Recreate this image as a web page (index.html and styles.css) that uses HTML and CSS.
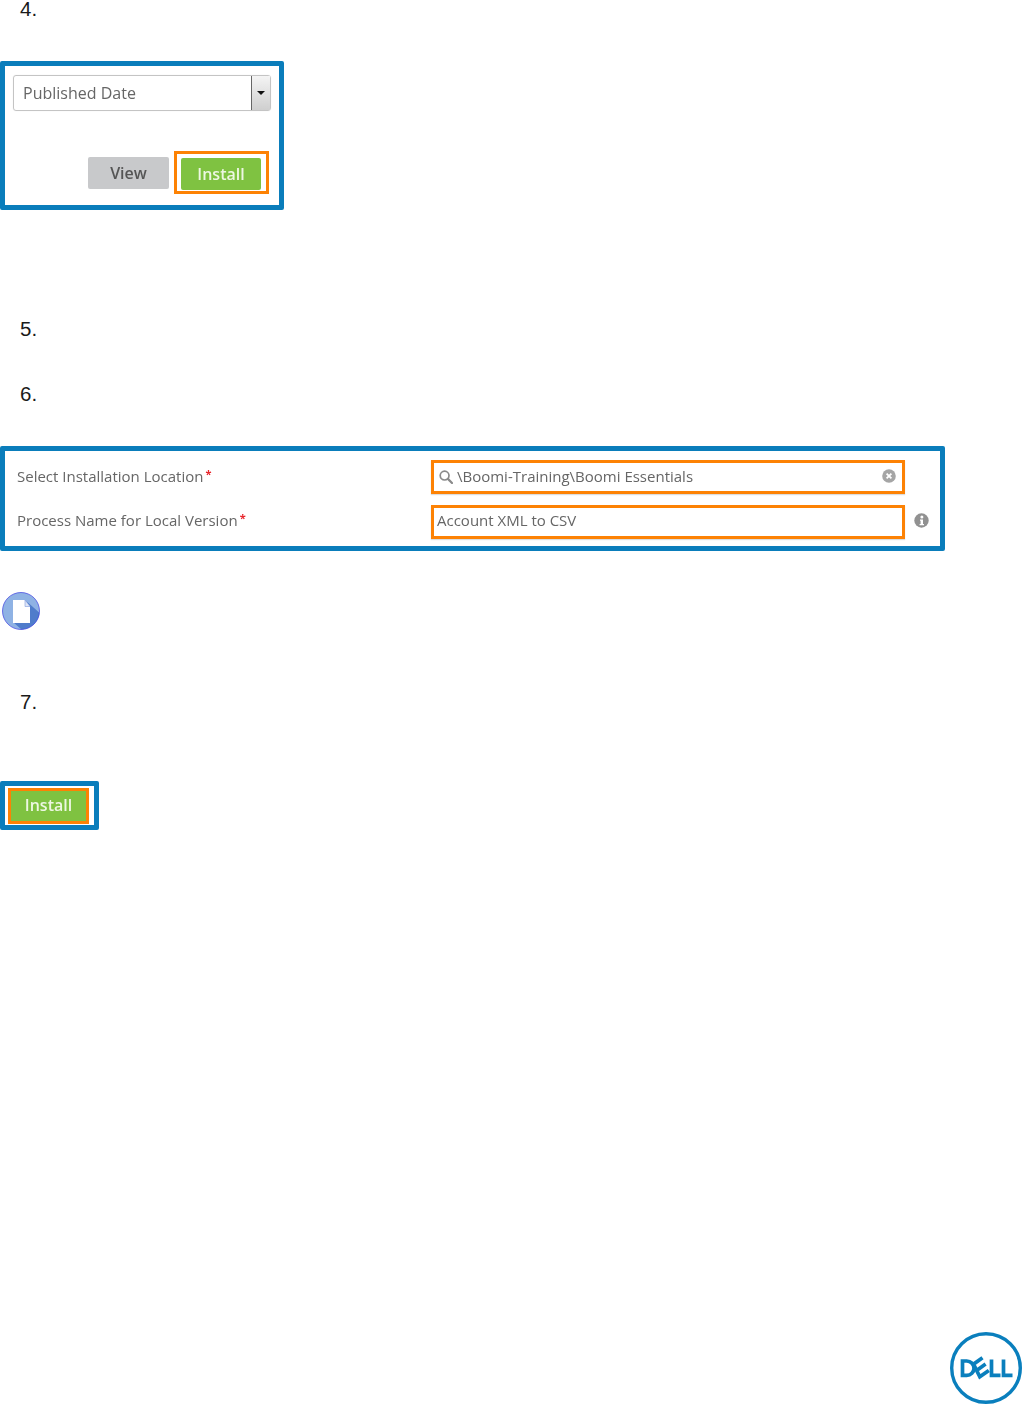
FILE: index.html
```html
<!DOCTYPE html>
<html lang="en">
<head>
<meta charset="utf-8">
<title>Install process</title>
<link rel="stylesheet" href="styles.css">
</head>
<body>
<main class="page">
  <p class="step">4.</p>
  <section class="shot shot-install">
    <div class="select">
      <span class="select-value">Published Date</span>
      <span class="select-btn"><i class="caret"></i></span>
    </div>
    <div class="actions">
      <span class="btn btn-view">View</span>
      <span class="hl hl-install"><span class="btn btn-go">Install</span></span>
    </div>
  </section>
  <p class="step step-5">5.</p>
  <p class="step step-6">6.</p>
  <section class="shot shot-form">
    <label class="lbl lbl-first">Select Installation Location<b class="req">*</b></label>
    <div class="field field-first">
      <svg class="ico-search" viewBox="0 0 14 14" width="14" height="14"><circle cx="5.6" cy="5.6" r="4.4" fill="none" stroke="#8a8a8a" stroke-width="1.7"/><path d="M8.900 8.900 13 13" stroke="#8a8a8a" stroke-width="2.200" stroke-linecap="round"/></svg>
      <span class="val">\Boomi-Training\Boomi Essentials</span>
      <svg class="ico-clear" viewBox="0 0 14 14" width="14" height="14"><circle cx="7" cy="7" r="6.800" fill="#a5a5a5"/><path d="M4.600 4.600 9.400 9.400M9.400 4.600 4.600 9.400" stroke="#fff" stroke-width="1.800"/></svg>
    </div>
    <span></span>
    <label class="lbl lbl-second">Process Name for Local Version<b class="req">*</b></label>
    <div class="field field-plain"><span class="val">Account XML to CSV</span></div>
    <svg class="ico-info" viewBox="0 0 15 15" width="15" height="15"><circle cx="7.500" cy="7.500" r="7.200" fill="#919191"/><circle cx="7.900" cy="3.900" r="1.500" fill="#fff"/><path d="M6 6.500h3v4.400h1v1.300H5.600v-1.300h1V7.800H6z" fill="#fff"/></svg>
  </section>
  <svg class="note" viewBox="0 0 38 38" width="38" height="38">
    <defs><clipPath id="disc"><circle cx="19" cy="19" r="18.500"/></clipPath></defs>
    <circle cx="19" cy="19" r="18.500" fill="#8fb2e4"/>
    <path d="M23 8 39 22V38H20L11 30Z" fill="#4f7ccb" clip-path="url(#disc)"/>
    <path d="M11 8h12l5 6.500V31H11z" fill="#fff"/>
    <path d="M23 8v6.500h5z" fill="#dfe6f6" stroke="#7f9bdc" stroke-width=".6"/>
    <circle cx="19" cy="19" r="18.500" fill="none" stroke="#3a3ee0" stroke-width=".7"/>
  </svg>
  <p class="step step-7">7.</p>
  <section class="shot shot-final">
    <span class="hl hl-final">Install</span>
  </section>
  <svg class="dell" viewBox="0 0 72 72" width="72" height="72" role="img" aria-label="Dell">
    <circle cx="36" cy="36" r="34.300" fill="none" stroke="#0a7fbd" stroke-width="3.400"/>
    <g fill="none" stroke="#0a7fbd" stroke-width="3.700">
      <path d="M12.500 29h4.300a7.200 7.200 0 0 1 0 14.400h-4.300z"/>
      <path d="M32.500 25.800 23.500 32.200 29.800 44.800 38.800 38.400M26.600 38.400 35.600 32.100"/>
      <path d="M41.500 27.500v15.900h9M53.500 27.500v15.900h9"/>
    </g>
  </svg>
</main>
</body>
</html>
```
FILE: styles.css
```css
* { box-sizing: border-box; }
html, body { margin: 0; padding: 0; background: #fff; overflow: hidden; }
.page { width: 1023px; height: 1405px; display: flex; flex-direction: column; align-items: flex-start; }
.step { margin: 0 0 0 20px; height: 18px; font: 20.5px/18px "Liberation Sans", Arial, sans-serif; color: #1a1a1a; }
.step-5 { margin-top: 110px; }
.step-6 { margin-top: 47px; }
.step-7 { margin-top: 63px; }
.shot { border: 5px solid #0a7dbb; border-radius: 2px; background: #fff; font-family: "Open Sans", sans-serif; color: #666; }
.select, .actions, .lbl, .field, .ico-info, .hl-final { filter: blur(.4px); }

.shot-install { width: 284px; height: 149px; margin-top: 43px; padding: 9px 8px 0 8px; }
.select { width: 258px; height: 36px; border: 1px solid #c4c4c4; border-radius: 3px; display: flex; align-items: center; justify-content: space-between; box-shadow: 0 0 1px #ddd; }
.select-value { padding-left: 9px; font-size: 16px; color: #666; }
.select-btn { width: 19px; height: 100%; background: linear-gradient(#f4f4f4, #cfcfcf); border-left: 1px solid #666; display: flex; align-items: center; justify-content: center; }
.caret { width: 0; height: 0; border: 4px solid transparent; border-top-color: #111; border-bottom: 0; }
.actions { margin: 40px 2px 0 0; display: flex; justify-content: flex-end; align-items: center; gap: 5px; }
.btn { display: flex; align-items: center; justify-content: center; width: 81px; height: 32px; font-size: 16px; font-weight: 600; border-radius: 2px; }
.btn-view { background: #c8c9cb; color: #555; }
.btn-go { width: 80px; background: #7fc241; color: #edf7e2; }
.hl { border: 3px solid #fd8204; }
.hl-install { width: 95px; height: 43px; padding: 4px 5px 0 4px; }

.shot-form { width: 945px; height: 105px; margin-top: 43px; padding: 9px 0 0 12px; display: grid; grid-template-columns: 414px 474px 1fr; grid-auto-rows: 34px; row-gap: 11px; align-items: center; font-size: 15px; }
.lbl { color: #666; font-size: 15px; }
.lbl-first { padding-bottom: 2px; }
.lbl-second { padding-bottom: 4px; }
.req { color: #e8262c; font-weight: 700; font-size: 11px; position: relative; top: -4px; margin-left: 2px; }
.field { height: 34px; border: 3px solid #fd8204; display: flex; align-items: center; padding: 0 8px 4px 3px; color: #666; box-shadow: 0 1px 1px #ddd; }
.field-first { padding: 0 6px 2px 5px; }
.val { font-size: 15px; color: #666; }
.ico-search { margin-right: 4px; flex: none; position: relative; top: 1px; }
.ico-clear { margin-left: auto; flex: none; }
.ico-info { margin: 0 0 4px 9px; }

.note { margin: 41px 0 0 2px; }

.shot-final { width: 99px; height: 49px; margin-top: 70px; padding: 2px 0 0 3px; }
.hl-final { display: flex; align-items: center; justify-content: center; width: 81px; height: 36px; padding-bottom: 2px; background: #7fc241; color: #edf7e2; font-size: 16px; font-weight: 600; }

.dell { margin: 502px 0 0 950px; }
```
